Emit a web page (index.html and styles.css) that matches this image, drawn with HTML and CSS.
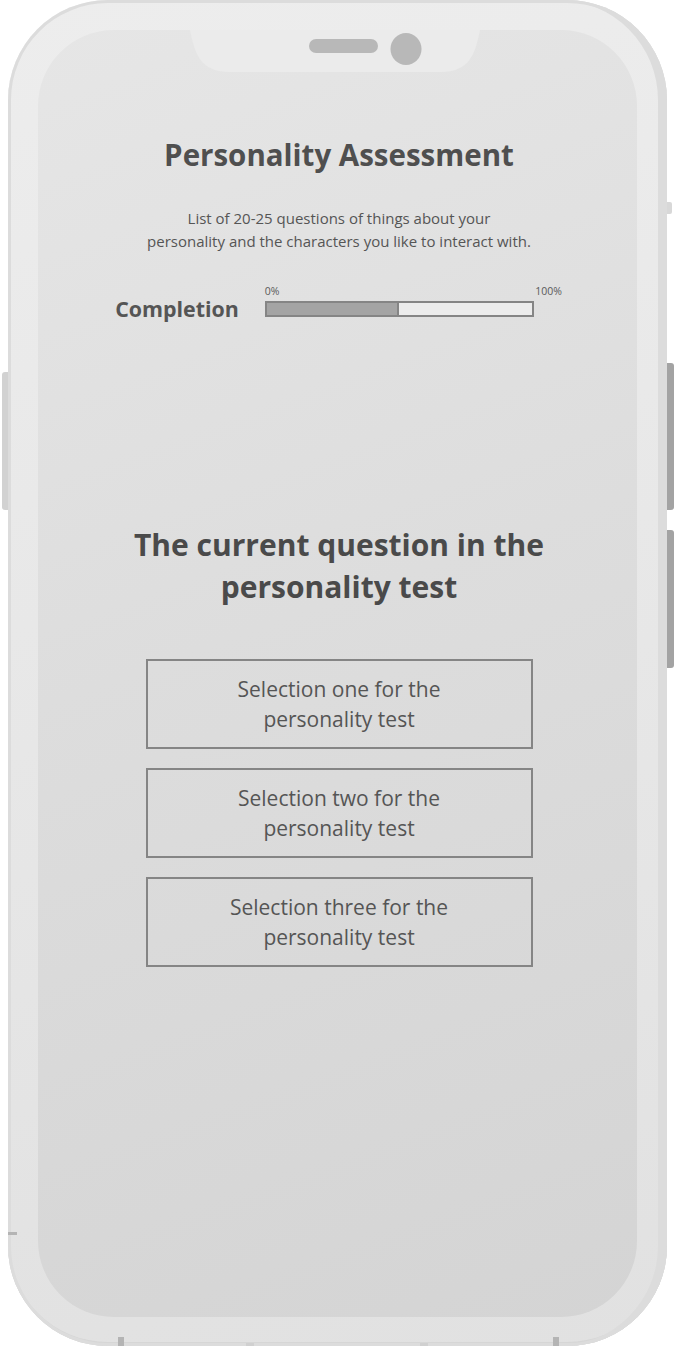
FILE: index.html
```html
<!DOCTYPE html>
<html lang="en">
<head>
<meta charset="utf-8">
<title>Personality Assessment</title>
<link rel="stylesheet" href="styles.css">
</head>
<body>
<div class="phone">
  <span class="btn btn-left"></span>
  <span class="btn btn-right-small"></span>
  <span class="btn btn-right-1"></span>
  <span class="btn btn-right-2"></span>
  <span class="mark mark-side"></span>
  <span class="mark mark-b1"></span>
  <span class="mark mark-b2 faint"></span>
  <span class="mark mark-b3 faint"></span>
  <span class="mark mark-b4"></span>
  <div class="screen">
    <svg class="notch" width="290" height="42" viewBox="0 0 290 42" aria-hidden="true">
      <path d="M0 0 C5 24 10 42 40 42 H250 C280 42 285 24 290 0 Z" fill="#ebebeb"/>
      <rect x="119" y="9" width="69" height="14" rx="7" fill="#b8b8b8"/>
      <ellipse cx="216" cy="19" rx="15.5" ry="16" fill="#b8b8b8"/>
    </svg>
    <h1 class="title">Personality Assessment</h1>
    <p class="subtitle">List of 20-25 questions of things about your<br>personality and the characters you like to interact with.</p>
    <div class="completion">
      <span class="completion-label">Completion</span>
      <div class="progress">
        <div class="progress-scale"><span>0%</span><span>100%</span></div>
        <div class="progress-bar"><div class="progress-fill" style="width:50%"></div></div>
      </div>
    </div>
    <h2 class="question">The current question in the<br>personality test</h2>
    <div class="options">
      <button class="option">Selection one for the<br>personality test</button>
      <button class="option">Selection two for the<br>personality test</button>
      <button class="option">Selection three for the<br>personality test</button>
    </div>
  </div>
</div>
</body>
</html>
```

FILE: styles.css
```css
* { box-sizing: border-box; }

html, body {
  margin: 0;
  padding: 0;
  background: #ffffff;
}

body {
  font-family: "Open Sans", "Noto Sans", "Liberation Sans", sans-serif;
  color: #505050;
}

.phone {
  position: relative;
  margin-left: 8px;
  width: 659px;
  height: 1346px;
  padding: 30px 30px 29px 30px;
  border-radius: 100px;
  background: linear-gradient(170deg, #ededed 0%, #e6e6e6 60%, #e1e1e1 100%);
  box-shadow: inset 0 0 0 3px #dcdcdc, inset -9px 0 0 #dcdcdc, inset 0 -4px 0 #d6d6d6;
}

.screen {
  position: relative;
  width: 100%;
  height: 100%;
  border-radius: 76px;
  background: linear-gradient(160deg, #e6e6e6 0%, #dddddd 45%, #d4d4d4 100%);
  display: flex;
  flex-direction: column;
  align-items: center;
  text-align: center;
}

.notch {
  position: absolute;
  top: 0;
  left: 152px;
  display: block;
}

.btn {
  position: absolute;
  display: block;
}
.btn-left {
  left: -6px;
  top: 372px;
  width: 6px;
  height: 138px;
  background: #d2d2d2;
  border-radius: 3px 0 0 3px;
}
.btn-right-small {
  right: -5px;
  top: 202px;
  width: 5px;
  height: 12px;
  background: #d8d8d8;
  border-radius: 0 2px 2px 0;
}
.btn-right-1 {
  right: -7px;
  top: 363px;
  width: 7px;
  height: 147px;
  background: #a3a3a3;
  border-radius: 0 3px 3px 0;
}
.btn-right-2 {
  right: -7px;
  top: 530px;
  width: 7px;
  height: 138px;
  background: #a3a3a3;
  border-radius: 0 3px 3px 0;
}

.mark {
  position: absolute;
  display: block;
  background: #b4b4b4;
}
.mark-side { left: 0; top: 1232px; width: 9px; height: 3px; }
.mark-b1 { left: 110px; bottom: 0; width: 6px; height: 9px; }
.mark-b2 { left: 238px; bottom: 0; width: 8px; height: 3px; }
.mark-b3 { left: 412px; bottom: 0; width: 8px; height: 3px; }
.mark-b4 { left: 545px; bottom: 0; width: 6px; height: 9px; }
.faint { background: #d0d0d0; }

.title {
  margin: 105px 0 0 3px;
  font-size: 29.5px;
  line-height: 40px;
  font-weight: 700;
  color: #4f4f4f;
}

.subtitle {
  margin: 32px 0 0 3px;
  font-size: 15px;
  line-height: 23px;
  color: #555555;
}

.completion {
  margin-top: 32px;
  display: flex;
  align-items: flex-end;
  gap: 26px;
  padding-left: 2px;
}

.completion-label {
  font-size: 21.4px;
  line-height: 28px;
  font-weight: 700;
  color: #555555;
  margin-bottom: -6px;
}

.progress {
  width: 297px;
  display: flex;
  flex-direction: column;
  gap: 3px;
}

.progress-scale {
  display: flex;
  justify-content: space-between;
  font-size: 10.5px;
  line-height: 13px;
  color: #5a5a5a;
}

.progress-bar {
  width: 269px;
  height: 16px;
  border: 2px solid #858585;
  background: #ececec;
}

.progress-fill {
  height: 100%;
  background: #a4a4a4;
  border-right: 2px solid #858585;
}

.question {
  margin: 207px 0 0 3px;
  font-size: 30px;
  line-height: 42px;
  font-weight: 700;
  color: #4a4a4a;
}

.options {
  margin-top: 51px;
  margin-left: 3px;
  display: flex;
  flex-direction: column;
  gap: 19px;
}

.option {
  width: 387px;
  height: 90px;
  border: 2px solid #858585;
  background: transparent;
  font-family: inherit;
  font-size: 21px;
  line-height: 30px;
  color: #555555;
  padding: 0;
  cursor: pointer;
}
```
